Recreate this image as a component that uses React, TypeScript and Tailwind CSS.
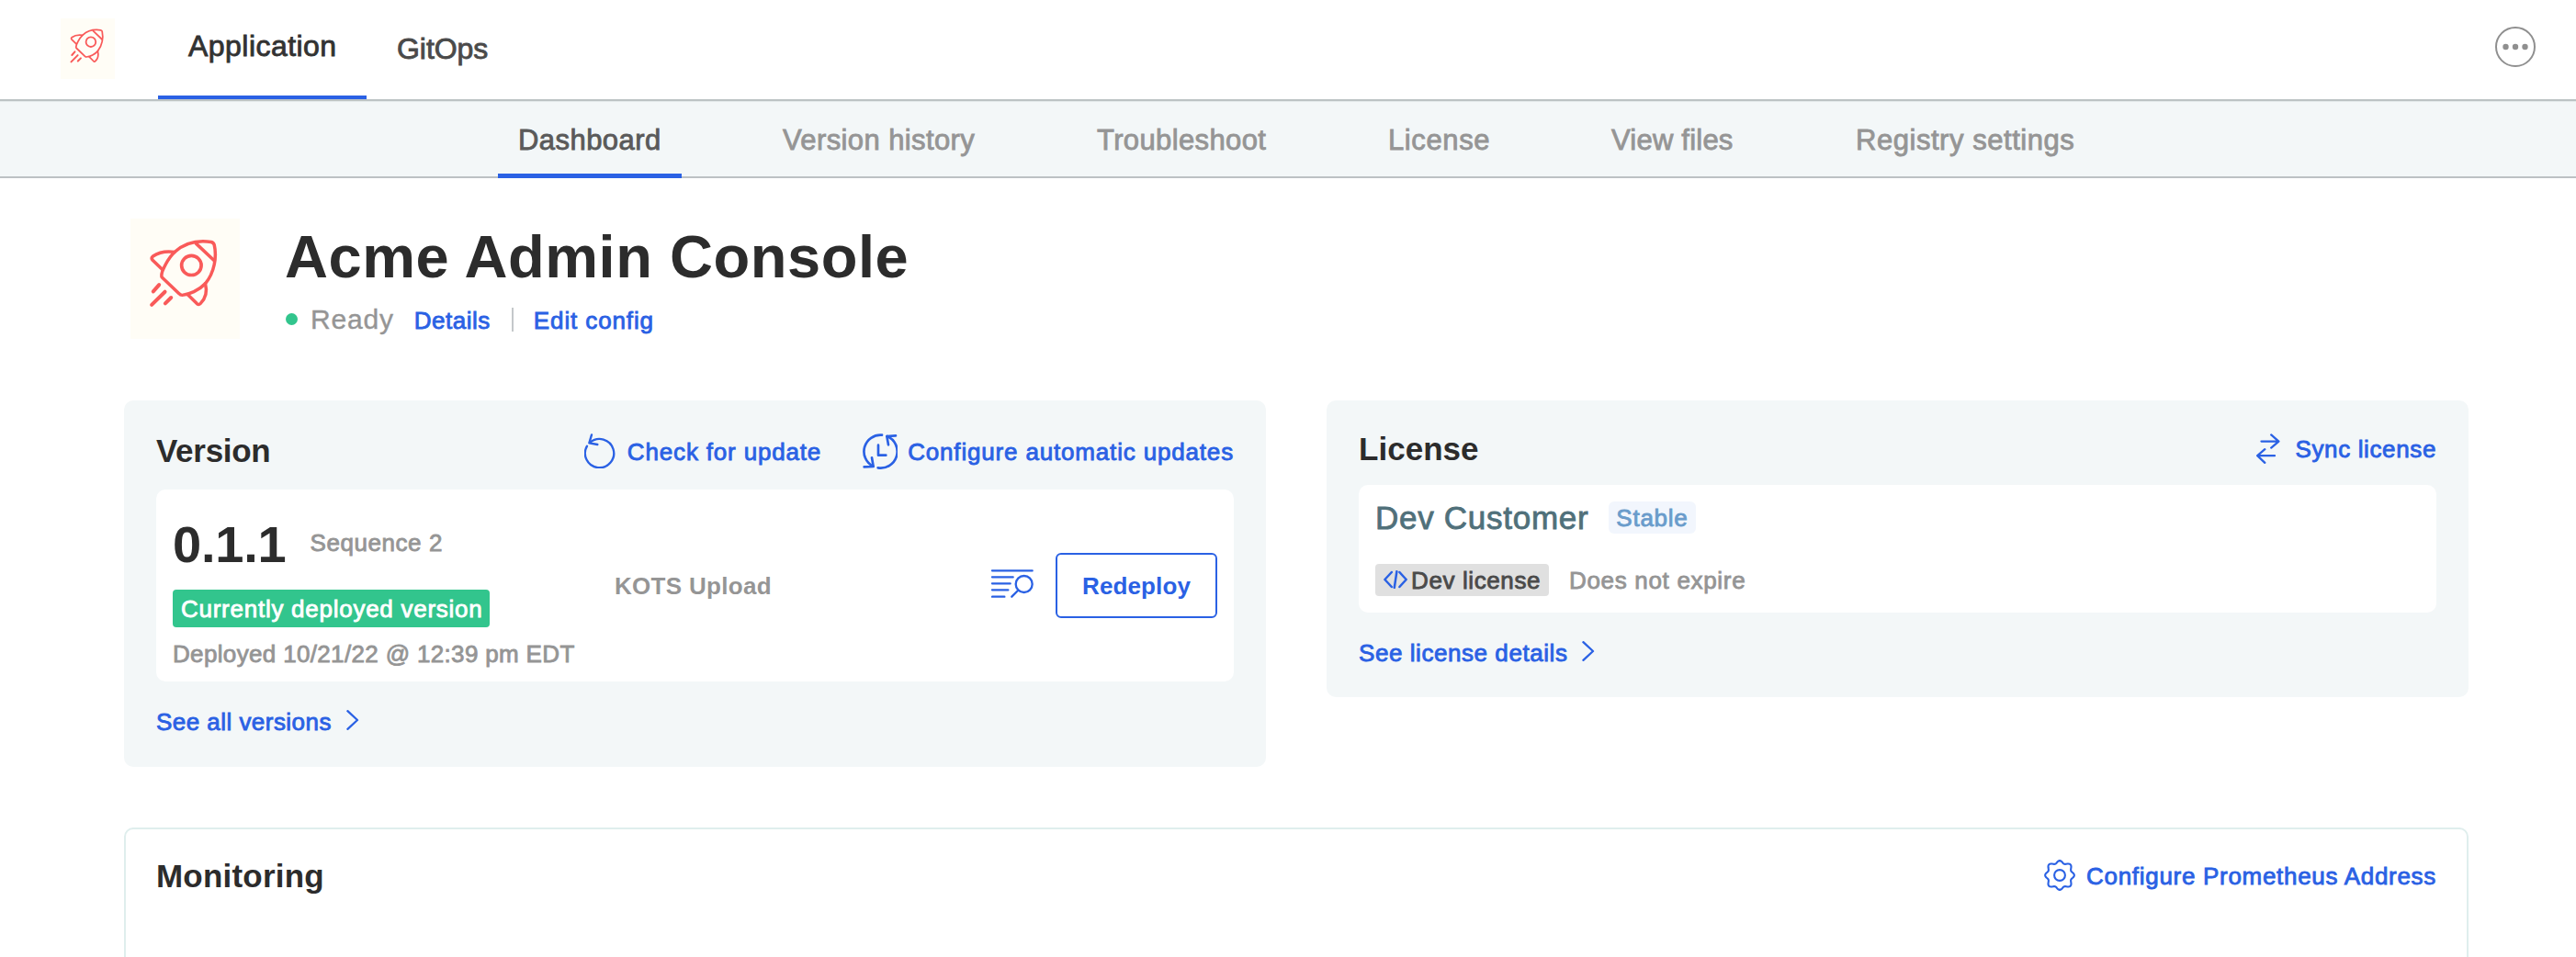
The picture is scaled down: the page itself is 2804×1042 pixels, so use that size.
import type { ReactNode } from "react";

const medium = "whitespace-nowrap [-webkit-text-stroke:0.85px_currentColor]";
const body = "text-[26px] leading-[30px]";

function RocketLogo({ className }: { className: string }) {
  return (
    <svg viewBox="0 0 355 396" preserveAspectRatio="none" className={className} fill="none" stroke="#f95a59" strokeWidth="10.5" strokeLinecap="round" strokeLinejoin="round">
      <path d="M101 188 C100 174 122 130 145 109 C175 82 215 70 262 77 Q270 79 272 86 C281 125 273 178 243 214 C222 237 190 250 168 252 Q162 252 158 247 L104 195 Q100 192 101 188Z" />
      <path d="M213 82 L272 138" />
      <circle cx="198" cy="154" r="32" strokeWidth="11" />
      <path d="M143 110 C115 106 90 112 73 124 Q66 130 72 137 L103 167" />
      <path d="M243 214 C250 240 245 262 227 280 Q221 286 215 279 L186 250" />
      <path d="M93 218 L74 240 M112 241 L69 284 M132 260 L113 279" strokeWidth="12" />
    </svg>
  );
}

function RefreshIcon() {
  return (
    <svg viewBox="0 0 102 114" className="h-[38px] w-[34px]" fill="none" stroke="#2a61e4" strokeWidth="7" strokeLinecap="round" strokeLinejoin="round">
      <path d="M19 29 A47 47 0 1 1 9 41" />
      <path d="M24 4 L16 31 L43 36" />
    </svg>
  );
}

function ScheduleIcon() {
  return (
    <svg viewBox="0 0 114 117" className="h-[39px] w-[38px]" fill="none" stroke="#2a61e4" strokeWidth="8" strokeLinecap="round" strokeLinejoin="round">
      <path d="M63 5 A54 54 0 0 0 34 107" />
      <path d="M5 109 L35 108 L30 79" />
      <path d="M50 112 A54 54 0 0 0 80 9" />
      <path d="M108 7 L79 9 L84 37" />
      <path d="M51 38 V71 H76" />
    </svg>
  );
}

function LogsIcon() {
  return (
    <svg viewBox="0 0 138 93" className="mt-[87px] h-[31px] w-[46px]" fill="none" stroke="#2a61e4" strokeWidth="7" strokeLinecap="round">
      <path d="M3 4 H134 M3 25 H71 M3 46 H62 M3 67 H55 M3 89 H43" />
      <circle cx="107" cy="48" r="27" />
      <path d="M87 69 L67 89" />
    </svg>
  );
}

function SwapIcon() {
  return (
    <svg viewBox="0 0 26 33" className="mt-[3px] h-[33px] w-[26px]" fill="none" stroke="#2a61e4" strokeWidth="2.3" strokeLinecap="round" strokeLinejoin="round">
      <path d="M5.5 8.6 H24 M16.2 1.4 L24.4 8.6 L16.2 15.6" />
      <path d="M20 24.2 H1.5 M9.3 17.2 L1.2 24.2 L9.3 31.8" />
    </svg>
  );
}

const gearOutline =
  Array.from({ length: 97 }, (_, i) => {
    const a = (i / 96) * Math.PI * 2;
    const r = 14.7 + 1.5 * Math.cos(8 * a) - 0.35 * Math.cos(4 * a);
    return `${i ? "L" : "M"}${(17 + r * Math.cos(a)).toFixed(2)} ${(17 + r * Math.sin(a)).toFixed(2)}`;
  }).join(" ") + "Z";

function GearIcon() {
  return (
    <svg viewBox="0 0 34 34" className="mt-0.5 h-[34px] w-[34px]" fill="none" stroke="#2a61e4" strokeWidth="2.1" strokeLinejoin="round">
      <path d={gearOutline} />
      <circle cx="17" cy="17" r="5.9" />
    </svg>
  );
}

function Chevron() {
  return (
    <svg viewBox="0 0 14 22" className="mt-0.5 h-[22px] w-[14px]" fill="none" stroke="#2a61e4" strokeWidth="2.3" strokeLinecap="round" strokeLinejoin="round">
      <path d="M1.4 1.2 L12 11 L1.4 20.8" />
    </svg>
  );
}

function CodeIcon() {
  return (
    <svg viewBox="0 0 26 20" className="mt-[7px] h-5 w-[26px]" fill="none" stroke="#2a61e4" strokeWidth="2.5" strokeLinecap="round" strokeLinejoin="round">
      <path d="M8.8 2 L1.4 10 L8.8 18 M14.4 1.2 L11.8 18.8 M17.4 2 L24.7 10 L17.4 18" />
    </svg>
  );
}

const tabs: { label: string; cls: string }[] = [
  { label: "Dashboard", cls: "w-[200px] border-b-[5px] border-[#2a61e4] text-[#5a5a5a] tracking-[0.45px]" },
  { label: "Version history", cls: "w-[254px] text-[#959595] tracking-[0.39px]" },
  { label: "Troubleshoot", cls: "w-[229px] text-[#959595] tracking-[0.37px]" },
  { label: "License", cls: "w-[155px] text-[#959595] tracking-[0.62px]" },
  { label: "View files", cls: "w-[178px] text-[#959595] tracking-[0.22px]" },
  { label: "Registry settings", cls: "w-[282px] text-[#959595] tracking-[0.54px]" },
];

function Heading({ children, className }: { children: ReactNode; className: string }) {
  return <h2 className={`text-[35px] leading-[39px] font-bold whitespace-nowrap text-[#2c2c2c] ${className}`}>{children}</h2>;
}

export default function App() {
  return (
    <div className="h-[1042px] w-[2804px] overflow-hidden bg-white font-['Liberation_Sans',Arial,sans-serif]">
      <header className="flex h-[110px] items-start border-b-2 border-[#bcc3c4]">
        <div className="mt-5 ml-[66px] bg-[#fffdf6]">
          <RocketLogo className="h-[66px] w-[59px]" />
        </div>
        <div className={`ml-[47px] h-[108px] w-[227px] border-b-4 border-[#2a61e4] pt-8 pl-[33px] text-[32px] leading-9 tracking-[0.46px] text-[#323232] ${medium}`}>Application</div>
        <div className={`mt-[35px] ml-[33px] text-[32px] leading-9 tracking-[-0.06px] text-[#4a4a4a] ${medium}`}>GitOps</div>
        <svg viewBox="0 0 44 44" className="mt-[29px] mr-[44px] ml-auto h-11 w-11">
          <circle cx="22" cy="22" r="21" fill="none" stroke="#8f8f8f" strokeWidth="2" />
          <circle cx="11.5" cy="22" r="3.2" fill="#8f8f8f" />
          <circle cx="22" cy="22" r="3.2" fill="#8f8f8f" />
          <circle cx="32.5" cy="22" r="3.2" fill="#8f8f8f" />
        </svg>
      </header>

      <nav className="flex h-[84px] items-start gap-[88px] border-t border-b-2 border-t-[#e4e9ea] border-b-[#bcc1c4] bg-[#f3f7f8] pl-[542px]">
        {tabs.map((t) => (
          <div key={t.label} className={`h-[83px] pt-6 pl-[22px] text-[31px] leading-[35px] ${medium} ${t.cls}`}>
            {t.label}
          </div>
        ))}
      </nav>

      <main className="pr-[117px] pl-[135px]">
        <section className="flex h-[242px] items-start pt-11 pl-[7px]">
          <div className="bg-[#fffdf6]">
            <RocketLogo className="h-[131px] w-[119px]" />
          </div>
          <div className="ml-[49px] pt-[5px]">
            <h1 className="text-[65px] leading-[73px] font-bold tracking-[0.55px] whitespace-nowrap text-[#2c2c2c]">Acme Admin Console</h1>
            <div className="mt-[15px] flex items-start pl-px">
              <span className="mt-[10px] h-[13px] w-[13px] rounded-full bg-[#32c58d]" />
              <span className="ml-[14px] text-[30px] leading-[33px] tracking-[0.8px] whitespace-nowrap text-[#959595] [-webkit-text-stroke:0.4px_currentColor]">Ready</span>
              <span className={`mt-[3px] ml-[22px] tracking-[0.52px] text-[#2a61e4] ${body} ${medium}`}>Details</span>
              <span className="mt-1 ml-[23px] h-[26px] w-0.5 bg-[#c4c8ca]" />
              <span className={`mt-[3px] ml-[22px] tracking-[0.88px] text-[#2a61e4] ${body} ${medium}`}>Edit config</span>
            </div>
          </div>
        </section>

        <section className="grid grid-cols-2 items-start gap-[66px]">
          <div className="h-[399px] rounded-[10px] bg-[#f3f7f8] px-[35px] pt-[35px]">
            <div className="flex h-[62px] items-start">
              <Heading className="tracking-[-0.29px]">Version</Heading>
              <div className="mt-px ml-auto flex items-start text-[#2a61e4]">
                <RefreshIcon />
                <span className={`mt-[5px] ml-[13px] tracking-[0.83px] ${body} ${medium}`}>Check for update</span>
                <span className="ml-[45px]">
                  <ScheduleIcon />
                </span>
                <span className={`mt-[5px] ml-[11px] tracking-[0.83px] ${body} ${medium}`}>Configure automatic updates</span>
              </div>
            </div>
            <div className="flex h-[209px] items-start rounded-[10px] bg-white pr-[18px] pl-[18px]">
              <div className="w-[481px] pt-7">
                <div className="flex items-start">
                  <span className="text-[56px] leading-[63px] font-bold tracking-[-0.2px] whitespace-nowrap text-[#2c2c2c]">0.1.1</span>
                  <span className={`mt-[15px] ml-[26px] tracking-[0.56px] text-[#959595] ${body} ${medium}`}>Sequence 2</span>
                </div>
                <div className={`mt-[18px] h-[41px] w-[345px] rounded-[4px] bg-[#32c58d] pt-[6px] pl-[9px] tracking-[0.74px] text-white ${body} ${medium}`}>Currently deployed version</div>
                <div className={`mt-[14px] tracking-[0.34px] text-[#959595] ${body} ${medium}`}>Deployed 10/21/22 @ 12:39 pm EDT</div>
              </div>
              <div className={`mt-[90px] font-bold tracking-[0.31px] whitespace-nowrap text-[#959595] ${body}`}>KOTS Upload</div>
              <div className="ml-auto flex items-start gap-6">
                <LogsIcon />
                <button className={`mt-[69px] h-[71px] w-[176px] rounded-[6px] border-2 border-[#2a61e4] text-center font-bold tracking-[0.12px] text-[#2a61e4] ${body}`}>Redeploy</button>
              </div>
            </div>
            <div className={`mt-[29px] flex items-start gap-4 tracking-[0.46px] text-[#2a61e4] ${body} ${medium}`}>
              See all versions
              <Chevron />
            </div>
          </div>

          <div className="h-[323px] rounded-[10px] bg-[#f3f7f8] px-[35px] pt-[33px]">
            <div className="flex h-[59px] items-start">
              <Heading className="tracking-[0.04px]">License</Heading>
              <div className="ml-auto flex items-start text-[#2a61e4]">
                <SwapIcon />
                <span className={`mt-[5px] ml-[16px] tracking-[0.63px] ${body} ${medium}`}>Sync license</span>
              </div>
            </div>
            <div className="h-[139px] rounded-[10px] bg-white pt-4 pl-[18px]">
              <div className="flex h-[70px] items-start">
                <span className={`text-[35px] leading-[39px] tracking-[0.72px] text-[#50707a] ${medium}`}>Dev Customer</span>
                <span className={`mt-0.5 ml-[22px] h-[35px] w-[95px] rounded-[6px] bg-[#f2f6fd] pt-[3px] pl-2 tracking-[0.75px] text-[#6a9ccb] ${body} ${medium}`}>Stable</span>
              </div>
              <div className="flex items-start">
                <span className="flex h-[35px] w-[189px] items-start rounded-[4px] bg-[#e0e0e0] pl-[9px]">
                  <CodeIcon />
                  <span className={`mt-[3px] ml-1 tracking-[0.61px] text-[#4a4a4a] ${body} ${medium}`}>Dev license</span>
                </span>
                <span className={`mt-[3px] ml-[22px] tracking-[0.68px] text-[#959595] ${body} ${medium}`}>Does not expire</span>
              </div>
            </div>
            <div className={`mt-[29px] flex items-start gap-4 tracking-[0.56px] text-[#2a61e4] ${body} ${medium}`}>
              See license details
              <Chevron />
            </div>
          </div>
        </section>

        <section className="mt-[66px] h-[200px] rounded-[10px] border-2 border-[#dfeeed] px-[33px] pt-[31px]">
          <div className="flex items-start">
            <Heading className="tracking-[0.21px]">Monitoring</Heading>
            <div className="ml-auto flex items-start text-[#2a61e4]">
              <GearIcon />
              <span className={`mt-[5px] ml-[12px] tracking-[0.7px] ${body} ${medium}`}>Configure Prometheus Address</span>
            </div>
          </div>
        </section>
      </main>
    </div>
  );
}
